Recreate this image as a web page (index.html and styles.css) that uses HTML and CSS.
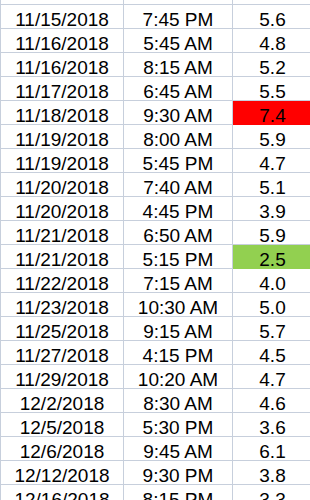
FILE: index.html
```html
<!DOCTYPE html>
<html>
<head>
<meta charset="utf-8">
<link rel="stylesheet" href="styles.css">
</head>
<body>
<div class="sheet">
  <div class="cell c1 top"></div><div class="cell c2 top"></div><div class="cell c3 top"></div>
  <div class="cell c1">11/15/2018</div><div class="cell c2">7:45 PM</div><div class="cell c3">5.6</div>
  <div class="cell c1">11/16/2018</div><div class="cell c2">5:45 AM</div><div class="cell c3">4.8</div>
  <div class="cell c1">11/16/2018</div><div class="cell c2">8:15 AM</div><div class="cell c3">5.2</div>
  <div class="cell c1">11/17/2018</div><div class="cell c2">6:45 AM</div><div class="cell c3">5.5</div>
  <div class="cell c1">11/18/2018</div><div class="cell c2">9:30 AM</div><div class="cell c3 red">7.4</div>
  <div class="cell c1">11/19/2018</div><div class="cell c2">8:00 AM</div><div class="cell c3">5.9</div>
  <div class="cell c1">11/19/2018</div><div class="cell c2">5:45 PM</div><div class="cell c3">4.7</div>
  <div class="cell c1">11/20/2018</div><div class="cell c2">7:40 AM</div><div class="cell c3">5.1</div>
  <div class="cell c1">11/20/2018</div><div class="cell c2">4:45 PM</div><div class="cell c3">3.9</div>
  <div class="cell c1">11/21/2018</div><div class="cell c2">6:50 AM</div><div class="cell c3">5.9</div>
  <div class="cell c1">11/21/2018</div><div class="cell c2">5:15 PM</div><div class="cell c3 green">2.5</div>
  <div class="cell c1">11/22/2018</div><div class="cell c2">7:15 AM</div><div class="cell c3">4.0</div>
  <div class="cell c1">11/23/2018</div><div class="cell c2">10:30 AM</div><div class="cell c3">5.0</div>
  <div class="cell c1">11/25/2018</div><div class="cell c2">9:15 AM</div><div class="cell c3">5.7</div>
  <div class="cell c1">11/27/2018</div><div class="cell c2">4:15 PM</div><div class="cell c3">4.5</div>
  <div class="cell c1">11/29/2018</div><div class="cell c2">10:20 AM</div><div class="cell c3">4.7</div>
  <div class="cell c1">12/2/2018</div><div class="cell c2">8:30 AM</div><div class="cell c3">4.6</div>
  <div class="cell c1">12/5/2018</div><div class="cell c2">5:30 PM</div><div class="cell c3">3.6</div>
  <div class="cell c1">12/6/2018</div><div class="cell c2">9:45 AM</div><div class="cell c3">6.1</div>
  <div class="cell c1">12/12/2018</div><div class="cell c2">9:30 PM</div><div class="cell c3">3.8</div>
  <div class="cell c1">12/16/2018</div><div class="cell c2">8:15 PM</div><div class="cell c3">3.3</div>
</div>
</body>
</html>
```
FILE: styles.css
```css
html, body {
  margin: 0;
  padding: 0;
  overflow: hidden;
  background: #ffffff;
}
.sheet {
  display: grid;
  grid-template-columns: 124px 109px 80px;
  font-family: "Liberation Sans", Arial, sans-serif;
  font-size: 19px;
  color: #000000;
}
.cell {
  box-sizing: border-box;
  height: 24px;
  border-right: 1px solid #c7cfdc;
  border-bottom: 1px solid #c7cfdc;
  display: flex;
  align-items: flex-end;
  justify-content: center;
  line-height: 17px;
  white-space: nowrap;
}
.c1 {
  border-left: 1px solid #c7cfdc;
}
.top {
  height: 5px;
}
.red {
  background: #ff0000;
  border-bottom-color: #ff0000;
}
.green {
  background: #92d050;
  border-bottom-color: #92d050;
}
```
